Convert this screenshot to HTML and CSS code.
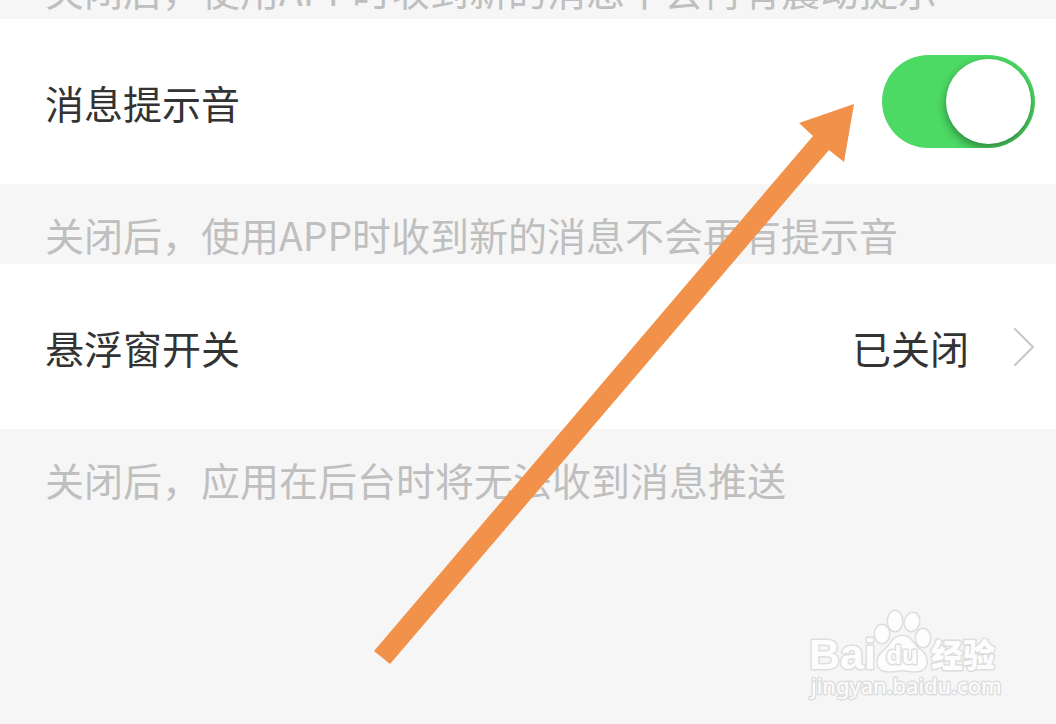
FILE: index.html
```
<!DOCTYPE html>
<html lang="zh-CN">
<head>
    <meta charset="UTF-8">
    <meta name="viewport" content="width=device-width, initial-scale=1.0">
    <title>消息设置</title>
    <link rel="stylesheet" href="styles.css">
</head>
<body>
    <main class="settings">
        <p class="hint">关闭后，使用APP时收到新的消息不会再有震动提示</p>
        <div class="row">
            <label for="sound">消息提示音</label>
            <input type="checkbox" id="sound" class="switch" checked>
        </div>
        <p class="hint">关闭后，使用APP时收到新的消息不会再有提示音</p>
        <a href="#" class="row">
            <span>悬浮窗开关</span>
            <span class="value">已关闭
                <svg class="chevron" viewBox="0 0 22 40" aria-hidden="true">
                    <path d="M2 2 L20 20 L2 38"/>
                </svg>
            </span>
        </a>
        <p class="hint">关闭后，应用在后台时将无法收到消息推送</p>
    </main>

    <!-- Arrow pointing at the switch -->
    <svg class="arrow" viewBox="0 0 482 562" aria-hidden="true">
        <polygon points="480,2 425,21 439,34 0,549 16,562 455,48 470,60"/>
    </svg>

    <!-- Watermark -->
    <svg class="watermark" viewBox="0 0 200 100" role="img" aria-label="Baidu 经验">
        <text class="brand" x="1" y="64">Bai</text>
        <ellipse cx="74" cy="29" rx="7" ry="9"/>
        <ellipse cx="87" cy="16" rx="7" ry="10"/>
        <ellipse cx="104" cy="17" rx="7" ry="9" transform="rotate(14 104 17)"/>
        <ellipse cx="115" cy="33" rx="7" ry="9"/>
        <path d="M94 31 C85 31 83 40 77 45 C68 51 66 66 79 66 C86 67 90 65 94 65 C99 65 103 67 110 66 C121 65 121 51 112 45 C105 40 103 31 94 31 Z"/>
        <text class="du" x="78" y="59">du</text>
        <text class="cn" x="123" y="62">经验</text>
        <text class="url" x="3" y="89">jingyan.baidu.com</text>
    </svg>
</body>
</html>
```
FILE: styles.css
```
* {
    box-sizing: border-box;
}
body {
    margin: 0;
    min-height: 100vh;
    position: relative;
    overflow: hidden;
    background-color: #f6f6f6;
    color: #333;
    font-family: "Noto Sans CJK SC", sans-serif;
    font-size: 39px;
    line-height: 46px;
}
/* the list is scrolled part of the way up */
.settings {
    margin-top: -61px;
}
.hint {
    margin: 0;
    padding: 27px 45px 7px;
    color: #bfbfbf;
}
.row {
    display: flex;
    justify-content: space-between;
    align-items: center;
    min-height: 165px;
    padding: 0 21px 0 45px;
    background: white;
    color: inherit;
    text-decoration: none;
}
.value {
    display: flex;
    align-items: center;
    gap: 44px;
}
.chevron {
    width: 22px;
    height: 40px;
    fill: none;
    stroke: #c8c8c8;
    stroke-width: 2;
    stroke-linecap: round;
}
/* Switch */
.switch {
    appearance: none;
    display: flex;
    width: 153px;
    height: 93px;
    margin: 0;
    padding: 4px;
    border-radius: 47px;
    background: #4cd964;
    overflow: hidden;
    cursor: pointer;
}
.switch::before {
    content: "";
    width: 85px;
    height: 85px;
    border-radius: 50%;
    background: white;
    box-shadow: 0 4px 10px rgba(0, 0, 0, 0.4);
}
.switch:checked::before {
    margin-left: auto;
}
.switch:not(:checked) {
    background: #ddd;
}
.arrow {
    position: absolute;
    top: 102px;
    left: 374px;
    width: 482px;
    height: 562px;
    fill: #f2924a;
    pointer-events: none;
}
/* Watermark */
.watermark {
    position: absolute;
    right: 48px;
    bottom: 19px;
    width: 200px;
    height: 100px;
    overflow: visible;
    fill: #fdfdfd;
    stroke: #dedede;
    stroke-width: 3;
    stroke-linejoin: round;
    paint-order: stroke;
}
.brand {
    font: bold 43px "Liberation Sans", sans-serif;
}
.du {
    font: bold 25px "Noto Sans", sans-serif;
}
.cn {
    font: 900 32px "Noto Sans CJK SC", sans-serif;
}
.url {
    font: 22px "Noto Sans", sans-serif;
}
```
